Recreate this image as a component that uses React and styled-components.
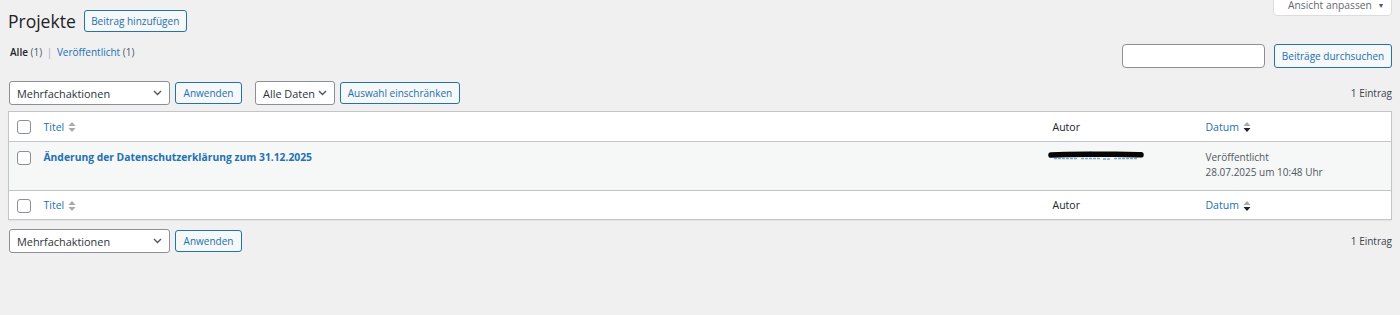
import React from 'react'
import styled, { createGlobalStyle } from 'styled-components'

const GlobalStyle = createGlobalStyle`
    body {
        margin: 0;
        background: #f0f0f1;
        font-family: "Open Sans", "Noto Sans", sans-serif;
        color: #3c434a;
        font-size: 10px;
    }
`

function SortArrows({ active }) {
    return (
        <svg width="8" height="12" viewBox="0 0 8 12">
            <path d="M4 1 L7.5 5 L0.5 5 Z" fill="#a7aaad" />
            <path d="M0.5 7 L7.5 7 L4 11 Z" fill={active ? '#1d2327' : '#a7aaad'} />
        </svg>
    )
}

function Chevron() {
    return (
        <svg width="9" height="6" viewBox="0 0 9 6">
            <path d="M1 1 L4.5 4.5 L8 1" fill="none" stroke="#50575e" strokeWidth="1.4" />
        </svg>
    )
}

// geschwärzter Autorname
function Redacted() {
    return (
        <RedactSvg width="96" height="12" viewBox="0 0 96 12">
            <path d="M6 8.5 H30 M33 8.5 H52 M55 9 H62 M66 8.5 H90" stroke="#7aa7d3" strokeWidth="1.6" strokeDasharray="3 1" />
            <path d="M42 3 L43 1" stroke="#7aa7d3" strokeWidth="1" />
            <path d="M3 5 C20 4 40 4.5 60 4.3 C75 4 85 4.5 93 4.8" fill="none" stroke="#050505" strokeWidth="5.5" strokeLinecap="round" />
        </RedactSvg>
    )
}

function Checkbox() {
    return <Box />
}

function Select({ width, ml, children }) {
    return (
        <SelectBox $width={width} $ml={ml}>
            <span>{children}</span>
            <Chevron />
        </SelectBox>
    )
}

function Tablenav({ full }) {
    return (
        <Nav>
            <Select width={161}>Mehrfachaktionen</Select>
            <Button $ml={5} $width={67}>Anwenden</Button>
            {full && (
                <>
                    <Select width={80} ml={13}>Alle Daten</Select>
                    <Button $ml={5} $width={120}>Auswahl einschränken</Button>
                </>
            )}
            <Count>1 Eintrag</Count>
        </Nav>
    )
}

function HeadRow() {
    return (
        <tr>
            <CheckCell as="th" $head><Checkbox /></CheckCell>
            <HeadCell><SortLink>Titel <SortArrows /></SortLink></HeadCell>
            <HeadCell>Autor</HeadCell>
            <HeadCell><SortLink>Datum <SortArrows active /></SortLink></HeadCell>
        </tr>
    )
}

export default function App() {
    return (
        <>
            <GlobalStyle />
            <Wrap>
                <TopBar>
                    <TitleGroup>
                        <Heading>Projekte</Heading>
                        <Button $width={103}>Beitrag hinzufügen</Button>
                    </TitleGroup>
                    <ScreenTab>Ansicht anpassen <span>▼</span></ScreenTab>
                </TopBar>

                <FilterRow>
                    <Subsub>
                        <b>Alle</b> <Muted>(1)</Muted> <Sep>|</Sep> <Link>Veröffentlicht</Link> <Muted>(1)</Muted>
                    </Subsub>
                    <SearchBox>
                        <Input />
                        <Button $width={118} $height={24}>Beiträge durchsuchen</Button>
                    </SearchBox>
                </FilterRow>

                <Tablenav full />

                <Table>
                    <colgroup>
                        <col style={{ width: 25 }} />
                        <col />
                        <col style={{ width: 153 }} />
                        <col style={{ width: 196 }} />
                    </colgroup>
                    <thead>
                        <HeadRow />
                    </thead>
                    <tbody>
                        <BodyRow>
                            <CheckCell><Checkbox /></CheckCell>
                            <Cell><TitleLink>Änderung der Datenschutzerklärung zum 31.12.2025</TitleLink></Cell>
                            <Cell><Redacted /></Cell>
                            <Cell>Veröffentlicht<br />28.07.2025 um 10:48 Uhr</Cell>
                        </BodyRow>
                    </tbody>
                    <tfoot>
                        <HeadRow />
                    </tfoot>
                </Table>

                <BottomNav>
                    <Tablenav />
                </BottomNav>
            </Wrap>
        </>
    )
}

const Wrap = styled.div`
    padding: 0 8px;
`

const TopBar = styled.div`
    display: flex;
    justify-content: space-between;
    align-items: flex-start;
    height: 32px;
`

const TitleGroup = styled.div`
    display: flex;
    align-items: center;
    gap: 8px;
    margin-top: 10px;
    height: 22px;
`

const Heading = styled.h1`
    margin: 0 0 1px;
    font-size: 17.5px;
    font-weight: 400;
    color: #1d2327;
    line-height: 22px;
`

const Button = styled.button`
    box-sizing: border-box;
    width: ${p => p.$width}px;
    height: ${p => p.$height || 22}px;
    margin-left: ${p => p.$ml || 0}px;
    padding: 0;
    border: 1px solid #2271b1;
    border-radius: 3px;
    background: #f6f7f7;
    color: #2271b1;
    font-family: inherit;
    font-size: 10px;
    white-space: nowrap;
    cursor: pointer;
`

const ScreenTab = styled.div`
    box-sizing: border-box;
    height: 24px;
    margin-top: -8px;
    width: 119px;
    padding: 5px 0 0 14px;
    background: #fff;
    border: 1px solid #dcdcde;
    border-radius: 0 0 4px 4px;
    color: #646970;
    font-size: 10.3px;

    span {
        font-size: 7px;
        margin-left: 3px;
        vertical-align: 1px;
        color: #50575e;
    }
`

const FilterRow = styled.div`
    display: flex;
    justify-content: space-between;
    align-items: flex-start;
    margin-top: 12px;
`

const Subsub = styled.div`
    margin: 1px 0 0 2px;
    line-height: 14px;
    color: #1d2327;

    b {
        font-weight: 600;
    }
`

const Muted = styled.span`
    color: #50575e;
`

const Sep = styled.span`
    color: #a7aaad;
    margin: 0 2px;
`

const Link = styled.span`
    color: #2271b1;
`

const SearchBox = styled.div`
    display: flex;
    gap: 9px;
`

const Input = styled.input`
    box-sizing: border-box;
    width: 143px;
    height: 24px;
    border: 1px solid #8c8f94;
    border-radius: 4px;
    background: #fff;
`

const Nav = styled.div`
    display: flex;
    align-items: center;
    height: 24px;
    margin-top: 13px;
    padding-left: 1px;
`

const SelectBox = styled.div`
    box-sizing: border-box;
    width: ${p => p.$width}px;
    height: 24px;
    margin-left: ${p => p.$ml || 0}px;
    display: flex;
    align-items: center;
    justify-content: space-between;
    padding: 0 7px 0 7px;
    border: 1px solid #8c8f94;
    border-radius: 3px;
    background: #fff;
    color: #2c3338;
    font-size: 10.9px;
    white-space: nowrap;
`

const Count = styled.div`
    margin-left: auto;
    color: #3c434a;
    font-size: 10px;
`

const Table = styled.table`
    width: 100%;
    margin-top: 6px;
    table-layout: fixed;
    border-collapse: collapse;
    border: 1px solid #c3c4c7;
    background: #fff;
    box-shadow: 0 1px 1px rgba(0, 0, 0, 0.04);

    thead tr th {
        border-bottom: 1px solid #c3c4c7;
    }

    tfoot tr th {
        border-top: 1px solid #c3c4c7;
        height: 27px;
    }
`

const Box = styled.span`
    display: block;
    box-sizing: border-box;
    width: 14px;
    height: 14px;
    border: 1px solid #8c8f94;
    border-radius: 3px;
    background: #fff;
`

const CheckCell = styled.td`
    padding: ${p => (p.$head ? '1px 0 0 8px' : '9px 0 0 8px')};
    vertical-align: ${p => (p.$head ? 'middle' : 'top')};
`

const HeadCell = styled.th`
    height: 29px;
    padding: 0 10px;
    text-align: left;
    font-weight: 400;
    font-size: 10.5px;
    color: #1d2327;
`

const SortLink = styled.span`
    display: inline-flex;
    align-items: center;
    gap: 4px;
    color: #2271b1;

    svg {
        margin-top: 1px;
    }
`

const BodyRow = styled.tr`
    background: #f6f7f7;
    height: 49px;
`

const Cell = styled.td`
    padding: 8px 10px 0;
    vertical-align: top;
    font-size: 10px;
    line-height: 15px;
    color: #50575e;
`

const RedactSvg = styled.svg`
    display: block;
    margin: 0 0 0 -5px;
`

const TitleLink = styled.span`
    color: #2271b1;
    font-weight: 700;
    font-size: 10.3px;
`

const BottomNav = styled.div`
    margin-top: -4px;
`
